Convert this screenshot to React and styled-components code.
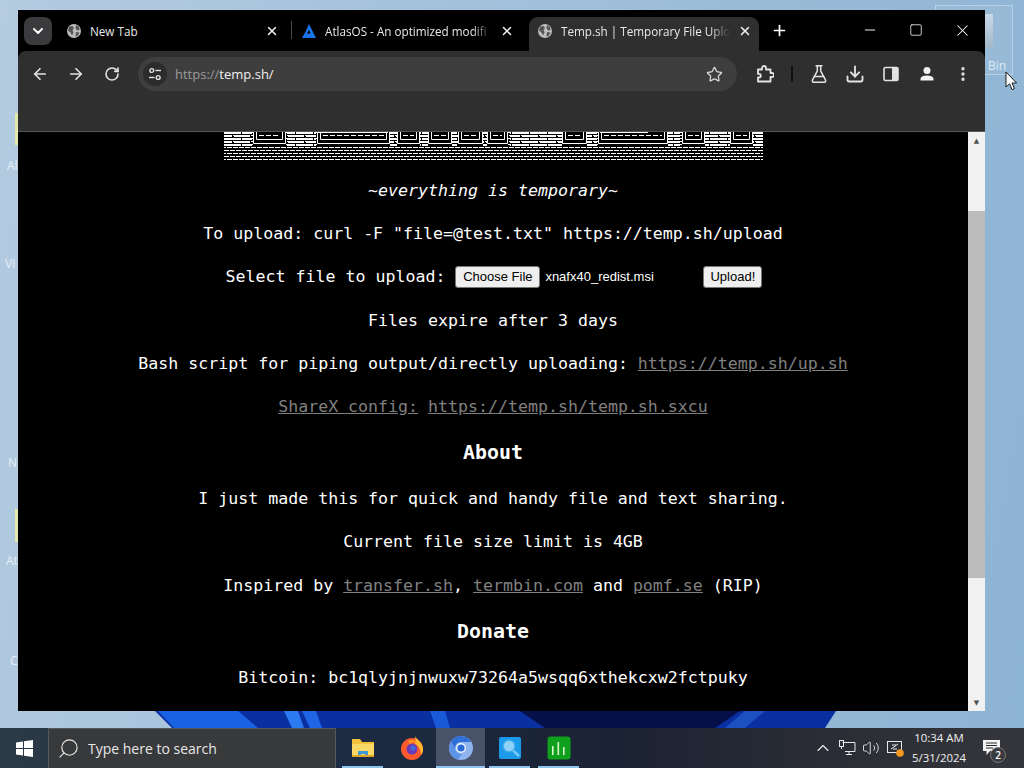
import React from "react";
import styled, { createGlobalStyle } from "styled-components";
import {
	ArrowLeft,
	ArrowRight,
	ChevronDown,
	ChevronUp,
	Download,
	FlaskConical,
	Minus,
	MoreVertical,
	Plus,
	RotateCw,
	Search,
	Square,
	Star,
	Volume2,
	X
} from "lucide-react";

const GlobalStyle = createGlobalStyle`
	html, body {
		margin: 0;
		padding: 0;
		width: 1024px;
		height: 768px;
		overflow: hidden;
		background: #000;
	}
	* {
		box-sizing: border-box;
	}
`;

const uiFont = `"Open Sans", "Noto Sans", sans-serif`;

// blocks and boxes of the ascii banner, as [x, width] inside the 539px wide art
const artBlocks = [[0, 28], [63, 29], [166, 7], [196, 8], [228, 6], [259, 4], [286, 52], [363, 10], [444, 12], [481, 25], [529, 10]];
const artBoxes = [[29, 33], [93, 73], [173, 23], [204, 24], [234, 25], [263, 21], [338, 25], [374, 70], [458, 23], [506, 23]];

function AsciiArt() {
	return (
		<ArtSvg width="539" height="28" viewBox="0 0 539 28">
			<defs>
				<pattern id="shade" width="6" height="6" patternUnits="userSpaceOnUse">
					<rect x="0" y="0" width="5" height="1" fill="#fff" />
					<rect x="0" y="3" width="2" height="1" fill="#fff" />
					<rect x="3" y="3" width="3" height="1" fill="#fff" />
				</pattern>
				<pattern id="dense" width="18" height="6" patternUnits="userSpaceOnUse">
					<rect x="0" y="0" width="17" height="2" fill="#fff" />
					<rect x="0" y="3" width="8" height="2" fill="#fff" />
					<rect x="10" y="3" width="8" height="2" fill="#fff" />
				</pattern>
			</defs>
			<rect x="0" y="0" width="539" height="28" fill="url(#shade)" />
			{artBlocks.map(([x, w]) => (
				<rect key={x} x={x} y="0" width={w} height="14" fill="url(#dense)" />
			))}
			{artBoxes.map(([x, w]) => (
				<g key={x} fill="none" stroke="#fff" strokeWidth="1">
					<rect x={x} y="-1" width={w} height="14" fill="#000" stroke="none" />
					<path d={`M${x + 0.5} 0V11.5H${x + w - 0.5}V0`} />
					<path d={`M${x + 3.5} 0V7.5H${x + w - 3.5}V0`} />
					<path d={`M${x + 6} 3.5H${x + w - 6}`} strokeDasharray="5 2" />
				</g>
			))}
			<rect x="94" y="0" width="70" height="1" fill="#fff" />
			<rect x="376" y="0" width="48" height="1" fill="#fff" />
		</ArtSvg>
	);
}

function AtlasIcon() {
	return (
		<svg width="16" height="16" viewBox="0 0 16 16">
			<path d="M8 1 L15 15 H1 L3.4 10.5 H9.6 L8 7 L5.6 11 H3.4 Z" fill="#1a73e8" />
		</svg>
	);
}

function GlobeIcon() {
	return (
		<svg width="16" height="16" viewBox="0 0 16 16">
			<circle cx="8" cy="8" r="7" fill="#bdbdbd" />
			<path d="M3 3.5 L6.5 3 L8 5 L6.5 7 L7.5 9.5 L6 12.5 L4.5 9.5 L2 7.5Z M10 2 L13 4 L13.5 7 L11 7.5 L9.5 5Z M10 9 L13.5 9.5 L11.5 13 L9.5 13.5Z" fill="#555" />
		</svg>
	);
}

function SiteInfoIcon() {
	return (
		<svg width="14" height="14" viewBox="0 0 14 14" fill="none" stroke="#e3e3e3" strokeWidth="1.4">
			<circle cx="3.8" cy="3.5" r="1.9" />
			<path d="M7.5 3.5H13" />
			<circle cx="10.2" cy="10.5" r="1.9" />
			<path d="M1 10.5H6.5" />
		</svg>
	);
}

function PuzzleIcon() {
	return (
		<svg width="18" height="18" viewBox="0 0 18 18" fill="none" stroke="#e3e3e3" strokeWidth="1.8" strokeLinejoin="round">
			<path d="M2 4.5H6V3a2 2 0 0 1 4 0v1.5h4.5V8H16a2 2 0 0 1 0 4h-1.5v4.5H2v-4h1a1.8 1.8 0 0 0 0-3.6H2Z" />
		</svg>
	);
}

function SidePanelIcon() {
	return (
		<svg width="16" height="16" viewBox="0 0 16 16">
			<rect x="1" y="1.5" width="14" height="13" rx="1.5" fill="none" stroke="#e3e3e3" strokeWidth="1.6" />
			<rect x="9" y="1.5" width="6" height="13" fill="#e3e3e3" />
		</svg>
	);
}

function PersonIcon() {
	return (
		<svg width="16" height="16" viewBox="0 0 16 16" fill="#f2f2f2">
			<circle cx="8" cy="4.5" r="3.5" />
			<path d="M1.5 14.5v-1.6C1.5 10.6 5 9.5 8 9.5s6.5 1.1 6.5 3.4v1.6Z" />
		</svg>
	);
}

function WindowsLogo() {
	return (
		<svg width="17" height="17" viewBox="0 0 17 17" fill="#fff">
			<path d="M0 2.4 7 1.4V8H0ZM8 1.2 17 0V8H8ZM0 9H7V15.6L0 14.6ZM8 9H17V17L8 15.8Z" />
		</svg>
	);
}

function FolderIcon() {
	return (
		<svg width="24" height="22" viewBox="0 0 24 22">
			<path d="M1 2h8l2 3h12v15H1Z" fill="#f5c33b" />
			<path d="M1 7h22v13H1Z" fill="#fbd968" />
			<path d="M7 20v-6h10v6h-3v-3h-4v3Z" fill="#3f9bd8" />
			<path d="M1 18h22v2H1Z" fill="#e0a526" />
		</svg>
	);
}

function FirefoxIcon() {
	return (
		<svg width="24" height="24" viewBox="0 0 24 24">
			<circle cx="12" cy="13" r="11" fill="#ff5a2c" />
			<path d="M15 0c1 3 7 6 8 12 .5 3-1 6-2 7 0-5-2-9-6-11 1-3 0-6 0-8Z" fill="#ffbd2e" />
			<circle cx="12" cy="13" r="5.5" fill="#6a3bb5" />
			<path d="M8 5c3-2 8-1 10 3-3-2-6-2-8 0Z" fill="#ff9a1f" />
			<circle cx="13" cy="12" r="2.5" fill="#3d6fd8" />
		</svg>
	);
}

function ChromeCanaryIcon() {
	return (
		<svg width="24" height="24" viewBox="0 0 24 24">
			<circle cx="12" cy="12" r="12" fill="#8fb4ee" />
			<path d="M12 0a12 12 0 0 0-10 5.5L6 13a6 6 0 0 1 6-7h10A12 12 0 0 0 12 0Z" fill="#2f6fd8" />
			<path d="M2 5.5A12 12 0 0 0 9 23.6L13 18a6 6 0 0 1-7-5Z" fill="#5b93e8" />
			<circle cx="12" cy="12" r="5" fill="#eef4ff" />
			<circle cx="12" cy="12" r="3.6" fill="#2c6ad6" />
		</svg>
	);
}

function MagnifierAppIcon() {
	return (
		<svg width="24" height="24" viewBox="0 0 24 24">
			<rect x="1" y="1" width="22" height="22" rx="2" fill="#1a9ae8" />
			<circle cx="11" cy="10" r="6" fill="#8ed2f8" stroke="#3aa8ea" strokeWidth="1.5" />
			<path d="M15 14.5 21 20" stroke="#7cc8f4" strokeWidth="2.5" />
		</svg>
	);
}

function ChartAppIcon() {
	return (
		<svg width="24" height="24" viewBox="0 0 24 24">
			<rect x="0.5" y="0.5" width="23" height="23" rx="3" fill="#0fa01e" />
			<path d="M5 10v9h1.6v-9ZM10.5 6v13h1.6V6ZM16 11v8h1.6v-8Z" fill="#d6f5c8" />
		</svg>
	);
}

function NetworkIcon() {
	return (
		<svg width="17" height="16" viewBox="0 0 17 16" fill="none" stroke="#e8e8e8" strokeWidth="1">
			<path d="M3.5 2.5H16V11.5H6" />
			<rect x="0.5" y="0.5" width="4" height="6" />
			<path d="M2.5 6.5V9M10 11.5V14.5M7 14.5H13" />
		</svg>
	);
}

function DefenderIcon() {
	return (
		<svg width="17" height="17" viewBox="0 0 17 17" fill="none">
			<rect x="0.5" y="1.5" width="14" height="11" stroke="#e8e8e8" />
			<path d="M4 9 11 4M5 5h4M6 9h4" stroke="#e8e8e8" />
			<circle cx="13" cy="13" r="3.8" fill="#f39a1e" />
		</svg>
	);
}

function ActionCenterIcon() {
	return (
		<svg width="17" height="16" viewBox="0 0 17 16">
			<path d="M0 0H17V11H7L3.5 15V11H0Z" fill="#f4f4f4" />
			<path d="M3 3H14M3 5.5H14M3 8H10" stroke="#2a2b30" strokeWidth="1" />
		</svg>
	);
}

function Cursor() {
	return (
		<svg width="13" height="20" viewBox="0 0 13 20">
			<path d="M1 1V16L4.6 12.8L7 18.6L9.4 17.6L7 12H11.6Z" fill="#fff" stroke="#1a1a1a" strokeWidth="1" />
		</svg>
	);
}

export default function App() {
	return (
		<Screen>
			<GlobalStyle />
			<Desktop>
				<Wallpaper viewBox="0 0 1024 17" width="1024" height="17" preserveAspectRatio="none">
					<polygon points="155,0 836,0 825,17 172,17" fill="#0a2fa0" />
					<polygon points="158,0 238,0 258,17 174,17" fill="#1a62e4" />
					<polygon points="284,0 298,0 304,17 292,17" fill="#2b7af0" />
					<polygon points="302,0 316,0 322,17 310,17" fill="#1f66e6" />
					<polygon points="430,0 445,0 450,17 436,17" fill="#1a5ad8" />
					<polygon points="520,0 740,0 715,17 545,17" fill="#050f48" />
					<polygon points="745,0 765,0 745,17 725,17" fill="#1c50c0" />
				</Wallpaper>
				<BinPeek />
				<BinSelection />
				<BinLabel>Bin</BinLabel>
				<DesktopLabel $left={7} $top={157}>Al</DesktopLabel>
				<DesktopLabel $left={5} $top={255}>Vi</DesktopLabel>
				<DesktopLabel $left={8} $top={454}>N</DesktopLabel>
				<DesktopLabel $left={6} $top={552}>At</DesktopLabel>
				<DesktopLabel $left={10} $top={652}>C</DesktopLabel>
				<IconEdge $top={113} $height={32} />
				<IconEdge $top={509} $height={33} />
				<CursorSpot><Cursor /></CursorSpot>

				<BrowserWindow>
					<TabStrip>
						<TabSearch><ChevronDown size={16} strokeWidth={3} color="#fff" /></TabSearch>
						<Tab $width={233}>
							<GlobeIcon />
							<TabTitle>New Tab</TabTitle>
							<X size={14} strokeWidth={2.6} color="#eee" />
						</Tab>
						<TabDivider />
						<Tab $width={233}>
							<AtlasIcon />
							<TabTitle $fade>AtlasOS - An optimized modifi</TabTitle>
							<X size={14} strokeWidth={2.6} color="#eee" />
						</Tab>
						<Tab $width={230} $active>
							<GlobeIcon />
							<TabTitle $fade>Temp.sh | Temporary File Uplo</TabTitle>
							<X size={14} strokeWidth={2.6} color="#eee" />
						</Tab>
						<NewTab><Plus size={17} strokeWidth={2.4} color="#fff" /></NewTab>
						<WindowControls>
							<WindowButton><Minus size={16} strokeWidth={1.4} color="#fff" /></WindowButton>
							<WindowButton><Square size={14} strokeWidth={1.3} color="#fff" /></WindowButton>
							<WindowButton><X size={19} strokeWidth={1.3} color="#fff" /></WindowButton>
						</WindowControls>
					</TabStrip>

					<Toolbar>
						<NavRow>
							<NavButton><ArrowLeft size={18} strokeWidth={2.2} /></NavButton>
							<NavButton><ArrowRight size={18} strokeWidth={2.2} /></NavButton>
							<NavButton><RotateCw size={16} strokeWidth={2.4} /></NavButton>
							<Omnibox>
								<SiteChip><SiteInfoIcon /></SiteChip>
								<Url><UrlScheme>https://</UrlScheme>temp.sh/</Url>
								<Star size={17} strokeWidth={1.8} color="#d8d8d8" />
							</Omnibox>
							<NavButton $first><PuzzleIcon /></NavButton>
							<NavDivider />
							<NavButton><FlaskConical size={20} strokeWidth={1.8} /></NavButton>
							<NavButton><Download size={20} strokeWidth={2.2} /></NavButton>
							<NavButton><SidePanelIcon /></NavButton>
							<NavButton><PersonIcon /></NavButton>
							<NavButton><MoreVertical size={18} strokeWidth={2.4} /></NavButton>
						</NavRow>
					</Toolbar>

					<Viewport>
						<Page>
							<AsciiArt />
							<Line><em>~everything is temporary~</em></Line>
							<Line>To upload: curl -F "file=@test.txt" https://temp.sh/upload</Line>
							<UploadForm>
								<span>Select file to upload:</span>
								<FormButton $width={85}>Choose File</FormButton>
								<FileName>xnafx40_redist.msi</FileName>
								<FormButton $width={59}>Upload!</FormButton>
							</UploadForm>
							<Line>Files expire after 3 days</Line>
							<Line>Bash script for piping output/directly uploading: <PageLink>https://temp.sh/up.sh</PageLink></Line>
							<Line><PageLink>ShareX config:</PageLink> <PageLink>https://temp.sh/temp.sh.sxcu</PageLink></Line>
							<Heading>About</Heading>
							<Line>I just made this for quick and handy file and text sharing.</Line>
							<Line>Current file size limit is 4GB</Line>
							<Line>Inspired by <PageLink>transfer.sh</PageLink>, <PageLink>termbin.com</PageLink> and <PageLink>pomf.se</PageLink> (RIP)</Line>
							<Heading>Donate</Heading>
							<Line>Bitcoin: bc1qlyjnjnwuxw73264a5wsqq6xthekcxw2fctpuky</Line>
						</Page>
						<Scrollbar>
							<ScrollArrow>▲</ScrollArrow>
							<ScrollTrack><ScrollThumb /></ScrollTrack>
							<ScrollArrow>▼</ScrollArrow>
						</Scrollbar>
					</Viewport>
				</BrowserWindow>
			</Desktop>

			<Taskbar>
				<StartButton><WindowsLogo /></StartButton>
				<SearchBox>
					<FlippedIcon><Search size={23} strokeWidth={1.2} color="#e8e8e8" /></FlippedIcon>
					<SearchText>Type here to search</SearchText>
				</SearchBox>
				<TaskIcons>
					<TaskIcon $running><FolderIcon /></TaskIcon>
					<TaskIcon><FirefoxIcon /></TaskIcon>
					<TaskIcon $running $active><ChromeCanaryIcon /></TaskIcon>
					<TaskIcon $running><MagnifierAppIcon /></TaskIcon>
					<TaskIcon $running><ChartAppIcon /></TaskIcon>
				</TaskIcons>
				<Tray>
					<TrayIcon><ChevronUp size={20} strokeWidth={1.4} color="#e8e8e8" /></TrayIcon>
					<TrayIcon><NetworkIcon /></TrayIcon>
					<TrayIcon><Volume2 size={18} strokeWidth={1.2} color="#e8e8e8" /></TrayIcon>
					<TrayIcon><DefenderIcon /></TrayIcon>
					<Clock>
						<span>10:34 AM</span>
						<span>5/31/2024</span>
					</Clock>
					<ActionCenter>
						<ActionCenterIcon />
						<ActionBadge>2</ActionBadge>
					</ActionCenter>
				</Tray>
			</Taskbar>
		</Screen>
	);
}

const Screen = styled.div`
	width: 1024px;
	height: 768px;
	display: flex;
	flex-direction: column;
	overflow: hidden;
`;

const Desktop = styled.div`
	position: relative;
	flex: 1;
	background: linear-gradient(100deg, #b4cbe0 0%, #a3c1db 40%, #8db3d3 100%);
`;

const Wallpaper = styled.svg`
	position: absolute;
	left: 0;
	top: 711px;
	display: block;
`;

const BinPeek = styled.div`
	position: absolute;
	left: 985px;
	top: 14px;
	width: 8px;
	height: 34px;
	background: linear-gradient(180deg, #c5d8e8 0%, #9db4c8 100%);
`;

const BinSelection = styled.div`
	position: absolute;
	left: 935px;
	top: 5px;
	width: 78px;
	height: 70px;
	background: rgba(255, 255, 255, 0.06);
	border: 1px solid rgba(210, 230, 245, 0.5);
`;

const BinLabel = styled.div`
	position: absolute;
	left: 988px;
	top: 57px;
	font: 12px ${uiFont};
	color: #dcebf6;
`;

const DesktopLabel = styled.div`
	position: absolute;
	left: ${(p) => p.$left}px;
	top: ${(p) => p.$top}px;
	font: 12px ${uiFont};
	color: #e6eef6;
`;

const IconEdge = styled.div`
	position: absolute;
	left: 15px;
	top: ${(p) => p.$top}px;
	width: 3px;
	height: ${(p) => p.$height}px;
	background: #e4e8a8;
`;

const CursorSpot = styled.div`
	position: absolute;
	left: 1005px;
	top: 71px;
	line-height: 0;
`;

const BrowserWindow = styled.div`
	position: absolute;
	left: 18px;
	top: 10px;
	width: 967px;
	height: 701px;
	display: flex;
	flex-direction: column;
	background: #000;
	font-family: ${uiFont};
`;

const TabStrip = styled.div`
	height: 41px;
	flex: none;
	display: flex;
	align-items: flex-end;
	padding-left: 6px;
	background: #000;
`;

const TabSearch = styled.div`
	width: 28px;
	height: 28px;
	margin: 0 6px 6px 0;
	display: flex;
	align-items: center;
	justify-content: center;
	border-radius: 8px;
	background: #3b3b3d;
`;

const Tab = styled.div`
	position: relative;
	width: ${(p) => p.$width}px;
	height: 34px;
	display: flex;
	align-items: center;
	gap: 8px;
	padding: 0 9px 7px 8px;
	border-radius: 9px 9px 0 0;
	background: ${(p) => (p.$active ? "#2f2f2f" : "transparent")};
	margin-left: ${(p) => (p.$active ? "3px" : "0")};
	padding-right: ${(p) => (p.$active ? "7px" : "12px")};
	flex: none;
`;

const TabTitle = styled.div`
	flex: 1;
	min-width: 0;
	white-space: nowrap;
	font-size: 11.7px;
	color: #e8e8e8;
	-webkit-mask-image: ${(p) => (p.$fade ? "linear-gradient(to right, #000 88%, transparent 100%)" : "none")};
	mask-image: ${(p) => (p.$fade ? "linear-gradient(to right, #000 88%, transparent 100%)" : "none")};
`;

const TabDivider = styled.div`
	width: 1px;
	height: 18px;
	margin: 0 1px 12px 0;
	background: #4a4a4a;
	flex: none;
`;

const NewTab = styled.div`
	width: 28px;
	height: 28px;
	margin: 0 0 7px 6px;
	display: flex;
	align-items: center;
	justify-content: center;
`;

const WindowControls = styled.div`
	margin-left: auto;
	display: flex;
	align-self: flex-start;
`;

const WindowButton = styled.div`
	width: 46px;
	height: 40px;
	display: flex;
	align-items: center;
	justify-content: center;
`;

const Toolbar = styled.div`
	height: 81px;
	flex: none;
	padding-top: 6px;
	background: #2f2f2f;
	border-radius: 8px 8px 0 0;
	border-bottom: 1px solid #555;
`;

const NavRow = styled.div`
	display: flex;
	align-items: center;
	height: 34px;
	padding-left: 4px;
`;

const NavButton = styled.div`
	width: 36px;
	height: 34px;
	margin-left: ${(p) => (p.$first ? "10px" : "0")};
	display: flex;
	align-items: center;
	justify-content: center;
	color: #e3e3e3;
	flex: none;
`;

const NavDivider = styled.div`
	width: 2px;
	height: 16px;
	margin: 0 8px;
	background: #111;
	flex: none;
`;

const Omnibox = styled.div`
	width: 599px;
	height: 34px;
	margin-left: 8px;
	display: flex;
	align-items: center;
	padding: 0 14px 0 5px;
	border-radius: 17px;
	background: #3e3e3e;
	flex: none;
`;

const SiteChip = styled.div`
	width: 24px;
	height: 24px;
	display: flex;
	align-items: center;
	justify-content: center;
	border-radius: 12px;
	background: #2c2c2c;
	flex: none;
`;

const Url = styled.div`
	flex: 1;
	margin-left: 8px;
	font-size: 13px;
	color: #f0f0f0;
`;

const UrlScheme = styled.span`
	color: #9c9c9c;
`;

const Viewport = styled.div`
	flex: 1;
	min-height: 0;
	display: flex;
`;

const Page = styled.div`
	flex: 1;
	min-width: 0;
	overflow: hidden;
	display: flex;
	flex-direction: column;
	align-items: center;
	background: #000;
	color: #fff;
	font-family: "DejaVu Sans Mono", "Liberation Mono", monospace;
	font-size: 16.6px;
	line-height: 19.3px;
`;

const ArtSvg = styled.svg`
	display: block;
	flex: none;
	margin-bottom: 21px;
`;

const Line = styled.p`
	margin: 0 0 24px;
	white-space: pre-wrap;
	flex: none;
`;

const Heading = styled.h2`
	margin: 1px 0 23px;
	font-size: 19.9px;
	line-height: 24.7px;
	font-weight: bold;
	flex: none;
`;

const PageLink = styled.a`
	color: #808080;
	text-decoration: underline;
`;

const UploadForm = styled.div`
	display: flex;
	align-items: center;
	height: 22px;
	margin: -2px 0 23px;
	padding-left: 2px;
	flex: none;
`;

const FormButton = styled.button`
	width: ${(p) => p.$width}px;
	height: 22px;
	margin-left: 10px;
	padding: 0;
	font: 13px "Liberation Sans", Arial, sans-serif;
	color: #000;
	background: #efefef;
	border: 1px solid #767676;
	border-radius: 3px;
`;

const FileName = styled.span`
	width: 148px;
	margin-left: 5px;
	font: 13px "Liberation Sans", Arial, sans-serif;
	color: #fff;
`;

const Scrollbar = styled.div`
	width: 17px;
	flex: none;
	display: flex;
	flex-direction: column;
	background: #f1f1f1;
`;

const ScrollArrow = styled.div`
	height: 17px;
	flex: none;
	display: flex;
	align-items: center;
	justify-content: center;
	font: 7px "DejaVu Sans", sans-serif;
	color: #505050;
`;

const ScrollTrack = styled.div`
	flex: 1;
	padding: 62px 0 0;
`;

const ScrollThumb = styled.div`
	height: 367px;
	background: #bcbcbc;
`;

const Taskbar = styled.div`
	height: 40px;
	flex: none;
	display: flex;
	align-items: stretch;
	background: linear-gradient(90deg, #2c3a47 0%, #1c2b42 35%, #1b2233 60%, #2d2f36 85%, #35363b 100%);
	font-family: ${uiFont};
`;

const StartButton = styled.div`
	width: 48px;
	display: flex;
	align-items: center;
	justify-content: center;
	flex: none;
`;

const SearchBox = styled.div`
	width: 288px;
	display: flex;
	align-items: center;
	gap: 8px;
	padding-left: 8px;
	background: #38393b;
	border: 1px solid #56585c;
	border-bottom: none;
	flex: none;
`;

const FlippedIcon = styled.span`
	display: flex;
	transform: scaleX(-1);
`;

const SearchText = styled.span`
	font-size: 14px;
	color: #e8e8e8;
`;

const TaskIcons = styled.div`
	display: flex;
	margin-left: 2px;
`;

const TaskIcon = styled.div`
	position: relative;
	width: 49px;
	display: flex;
	align-items: center;
	justify-content: center;
	background: ${(p) => (p.$active ? "#48536a" : "transparent")};
	&::after {
		content: "";
		display: ${(p) => (p.$running ? "block" : "none")};
		position: absolute;
		left: ${(p) => (p.$active ? "0" : "4px")};
		right: ${(p) => (p.$active ? "0" : "4px")};
		bottom: 0;
		height: 2px;
		background: #8fc4ee;
	}
`;

const Tray = styled.div`
	margin-left: auto;
	display: flex;
	align-items: center;
	padding-right: 24px;
`;

const TrayIcon = styled.div`
	width: 24px;
	display: flex;
	align-items: center;
	justify-content: center;
	flex: none;
`;

const Clock = styled.div`
	width: 58px;
	display: flex;
	flex-direction: column;
	align-items: center;
	margin-left: 3px;
	font-size: 11.4px;
	line-height: 20px;
	color: #f0f0f0;
	white-space: nowrap;
`;

const ActionCenter = styled.div`
	position: relative;
	width: 17px;
	height: 24px;
	margin-left: 15px;
	display: flex;
	align-items: center;
`;

const ActionBadge = styled.div`
	position: absolute;
	left: 7px;
	top: 11px;
	width: 16px;
	height: 16px;
	display: flex;
	align-items: center;
	justify-content: center;
	border-radius: 8px;
	background: #3a3b40;
	border: 1px solid #777;
	font-size: 10px;
	font-weight: 600;
	color: #fff;
`;
